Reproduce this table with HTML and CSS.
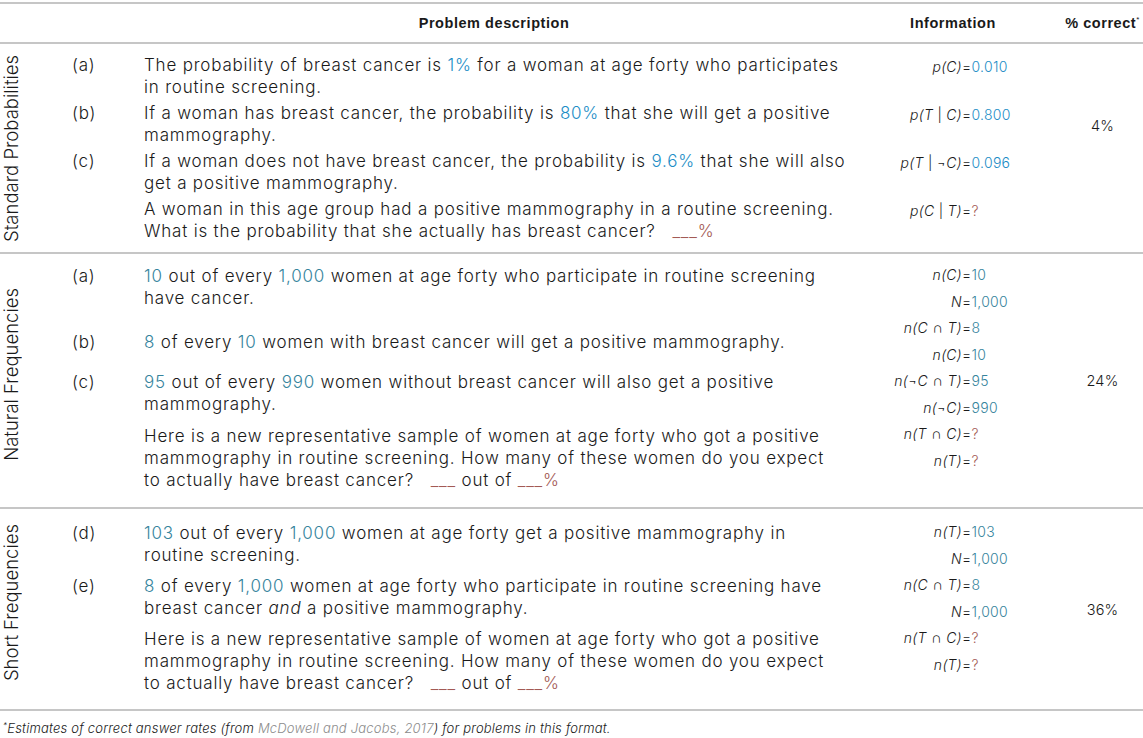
FILE: index.html
```html
<!DOCTYPE html>
<html lang="en">
<head>
<meta charset="utf-8">
<title>Problem formats</title>
<link rel="stylesheet" href="styles.css">
</head>
<body>
<div class="page">
  <div class="head">
    <div></div>
    <div class="hd">Problem description</div>
    <div class="hd">Information</div>
    <div class="hd">% correct<sup class="ast">*</sup></div>
  </div>

  <section class="sec s1">
    <div class="side"><span class="vlabel">Standard Probabilities</span></div>
    <div class="rows">
      <div class="row">
        <div class="lt">(a)</div>
        <div class="desc">The probability of breast cancer is <span class="b1">1%</span> for a woman at age forty who participates<br>in routine screening.</div>
        <div class="info">
          <div class="eq"><span class="k"><i>p</i>(<i>C</i>)</span><span class="v">=<span class="b1">0.010</span></span></div>
        </div>
      </div>
      <div class="row">
        <div class="lt">(b)</div>
        <div class="desc">If a woman has breast cancer, the probability is <span class="b1">80%</span> that she will get a positive<br>mammography.</div>
        <div class="info">
          <div class="eq"><span class="k"><i>p</i>(<i>T</i> <span class="bar">|</span> <i>C</i>)</span><span class="v">=<span class="b1">0.800</span></span></div>
        </div>
      </div>
      <div class="row">
        <div class="lt">(c)</div>
        <div class="desc">If a woman does not have breast cancer, the probability is <span class="b1">9.6%</span> that she will also<br>get a positive mammography.</div>
        <div class="info">
          <div class="eq"><span class="k"><i>p</i>(<i>T</i> <span class="bar">|</span> ¬<i>C</i>)</span><span class="v">=<span class="b1">0.096</span></span></div>
        </div>
      </div>
      <div class="row">
        <div class="lt"></div>
        <div class="desc">A woman in this age group had a positive mammography in a routine screening.<br>What is the probability that she actually has breast cancer? &nbsp;&nbsp;<span class="q">___%</span></div>
        <div class="info">
          <div class="eq"><span class="k"><i>p</i>(<i>C</i> <span class="bar">|</span> <i>T</i>)</span><span class="v">=<span class="q">?</span></span></div>
        </div>
      </div>
    </div>
    <div class="pct">4%</div>
  </section>

  <section class="sec s2">
    <div class="side"><span class="vlabel">Natural Frequencies</span></div>
    <div class="rows">
      <div class="row">
        <div class="lt">(a)</div>
        <div class="desc"><span class="t">10</span> out of every <span class="t">1,000</span> women at age forty who participate in routine screening<br>have cancer.</div>
        <div class="info">
          <div class="eq"><span class="k"><i>n</i>(<i>C</i>)</span><span class="v">=<span class="t">10</span></span></div>
          <div class="eq"><span class="k"><i>N</i></span><span class="v">=<span class="t">1,000</span></span></div>
        </div>
      </div>
      <div class="row mid">
        <div class="lt">(b)</div>
        <div class="desc"><span class="t">8</span> of every <span class="t">10</span> women with breast cancer will get a positive mammography.</div>
        <div class="info">
          <div class="eq"><span class="k"><i>n</i>(<i>C</i> <span class="op">∩</span> <i>T</i>)</span><span class="v">=<span class="t">8</span></span></div>
          <div class="eq"><span class="k"><i>n</i>(<i>C</i>)</span><span class="v">=<span class="t">10</span></span></div>
        </div>
      </div>
      <div class="row">
        <div class="lt">(c)</div>
        <div class="desc"><span class="t">95</span> out of every <span class="t">990</span> women without breast cancer will also get a positive<br>mammography.</div>
        <div class="info">
          <div class="eq"><span class="k"><i>n</i>(¬<i>C</i> <span class="op">∩</span> <i>T</i>)</span><span class="v">=<span class="t">95</span></span></div>
          <div class="eq"><span class="k"><i>n</i>(¬<i>C</i>)</span><span class="v">=<span class="t">990</span></span></div>
        </div>
      </div>
      <div class="row last">
        <div class="lt"></div>
        <div class="desc">Here is a new representative sample of women at age forty who got a positive<br>mammography in routine screening. How many of these women do you expect<br>to actually have breast cancer? &nbsp;&nbsp;<span class="q">___</span> out of <span class="q">___%</span></div>
        <div class="info">
          <div class="eq"><span class="k"><i>n</i>(<i>T</i> <span class="op">∩</span> <i>C</i>)</span><span class="v">=<span class="q">?</span></span></div>
          <div class="eq"><span class="k"><i>n</i>(<i>T</i>)</span><span class="v">=<span class="q">?</span></span></div>
        </div>
      </div>
    </div>
    <div class="pct">24%</div>
  </section>

  <section class="sec s3">
    <div class="side"><span class="vlabel">Short Frequencies</span></div>
    <div class="rows">
      <div class="row">
        <div class="lt">(d)</div>
        <div class="desc"><span class="t">103</span> out of every <span class="t">1,000</span> women at age forty get a positive mammography in<br>routine screening.</div>
        <div class="info">
          <div class="eq"><span class="k"><i>n</i>(<i>T</i>)</span><span class="v">=<span class="t">103</span></span></div>
          <div class="eq"><span class="k"><i>N</i></span><span class="v">=<span class="t">1,000</span></span></div>
        </div>
      </div>
      <div class="row">
        <div class="lt">(e)</div>
        <div class="desc"><span class="t">8</span> of every <span class="t">1,000</span> women at age forty who participate in routine screening have<br>breast cancer <i>and</i> a positive mammography.</div>
        <div class="info">
          <div class="eq"><span class="k"><i>n</i>(<i>C</i> <span class="op">∩</span> <i>T</i>)</span><span class="v">=<span class="t">8</span></span></div>
          <div class="eq"><span class="k"><i>N</i></span><span class="v">=<span class="t">1,000</span></span></div>
        </div>
      </div>
      <div class="row last">
        <div class="lt"></div>
        <div class="desc">Here is a new representative sample of women at age forty who got a positive<br>mammography in routine screening. How many of these women do you expect<br>to actually have breast cancer? &nbsp;&nbsp;<span class="q">___</span> out of <span class="q">___%</span></div>
        <div class="info">
          <div class="eq"><span class="k"><i>n</i>(<i>T</i> <span class="op">∩</span> <i>C</i>)</span><span class="v">=<span class="q">?</span></span></div>
          <div class="eq"><span class="k"><i>n</i>(<i>T</i>)</span><span class="v">=<span class="q">?</span></span></div>
        </div>
      </div>
    </div>
    <div class="pct">36%</div>
  </section>

  <p class="foot"><sup class="fa">*</sup>Estimates of correct answer rates (from <span class="link">McDowell and Jacobs, 2017</span>) for problems in this format.</p>
</div>
</body>
</html>
```

FILE: styles.css
```css
* { box-sizing: border-box; }

html, body {
  margin: 0;
  padding: 0;
  background: #ffffff;
}

body {
  font-family: Inter, Roboto, "Liberation Sans", Arial, sans-serif;
  font-weight: 300;
  color: #1a1a1a;
}

.page {
  width: 1143px;
  padding-top: 2px;
}

.head {
  display: grid;
  grid-template-columns: 144px 700px 218px 81px;
  height: 42px;
  border-top: 2px solid #c6c6c6;
  border-bottom: 2px solid #c6c6c6;
  align-items: center;
}

.hd {
  text-align: center;
  font-family: "Liberation Sans", Arial, sans-serif;
  font-weight: 700;
  font-size: 14.5px;
  letter-spacing: 0.55px;
  color: #1a1a1a;
  white-space: nowrap;
}

.ast {
  font-size: 8px;
  vertical-align: 6px;
  line-height: 0;
  font-weight: 400;
}

.sec {
  display: flex;
  border-bottom: 2px solid #c6c6c6;
}

.s1 { height: 210px; }
.s2 { height: 255px; }
.s3 { height: 202px; }

.side {
  width: 72px;
  flex: none;
  display: flex;
  align-items: center;
  justify-content: flex-start;
}

.s2 .side, .s3 .side { padding-bottom: 12px; }

.vlabel {
  writing-mode: vertical-rl;
  transform: rotate(180deg);
  font-size: 18.5px;
  line-height: 22px;
  white-space: nowrap;
}

.rows {
  width: 990px;
  flex: none;
  display: flex;
  flex-direction: column;
}

.s1 .rows { padding-top: 10px; gap: 4px; }
.s2 .rows { padding-top: 8px; }
.s3 .rows { padding-top: 10px; }

.row {
  display: grid;
  grid-template-columns: 72px 700px 218px;
  align-items: start;
}

.lt, .desc {
  font-size: 17px;
  line-height: 22px;
  letter-spacing: 0.8px;
  white-space: nowrap;
}

.s2 .lt, .s2 .desc, .s3 .lt, .s3 .desc { padding-top: 3px; }
.s2 .last .lt, .s2 .last .desc { padding-top: 4px; }

.row.mid { align-items: center; }
.row.mid .lt, .row.mid .desc { padding-top: 0; }

.info {
  display: flex;
  flex-direction: column;
}

.eq {
  display: grid;
  grid-template-columns: 118px auto;
  font-size: 14px;
  letter-spacing: 0.3px;
  line-height: 26.5px;
  white-space: nowrap;
}

.s1 .eq { line-height: 22px; padding-top: 2px; }

.k {
  text-align: right;
  font-style: italic;
}

.bar {
  font-style: normal;
}

.op {
  font-family: "DejaVu Sans", sans-serif;
  font-style: normal;
  font-size: 15px;
  line-height: 1;
}

.b1 { color: #1b8dc6; }
.t { color: #36849d; }
.q { color: #a35a55; }

.pct {
  width: 81px;
  flex: none;
  display: flex;
  align-items: center;
  justify-content: center;
  font-size: 14.5px;
  letter-spacing: 0.2px;
}

.s1 .pct { padding-bottom: 46px; }

.foot {
  margin: 8px 0 0 0;
  padding-left: 3px;
  font-size: 13px;
  line-height: 18px;
  letter-spacing: 0.2px;
  font-style: italic;
  white-space: nowrap;
}

.fa {
  font-size: 8px;
  vertical-align: 5px;
  line-height: 0;
}

.link { color: #8c8c8c; }
```
